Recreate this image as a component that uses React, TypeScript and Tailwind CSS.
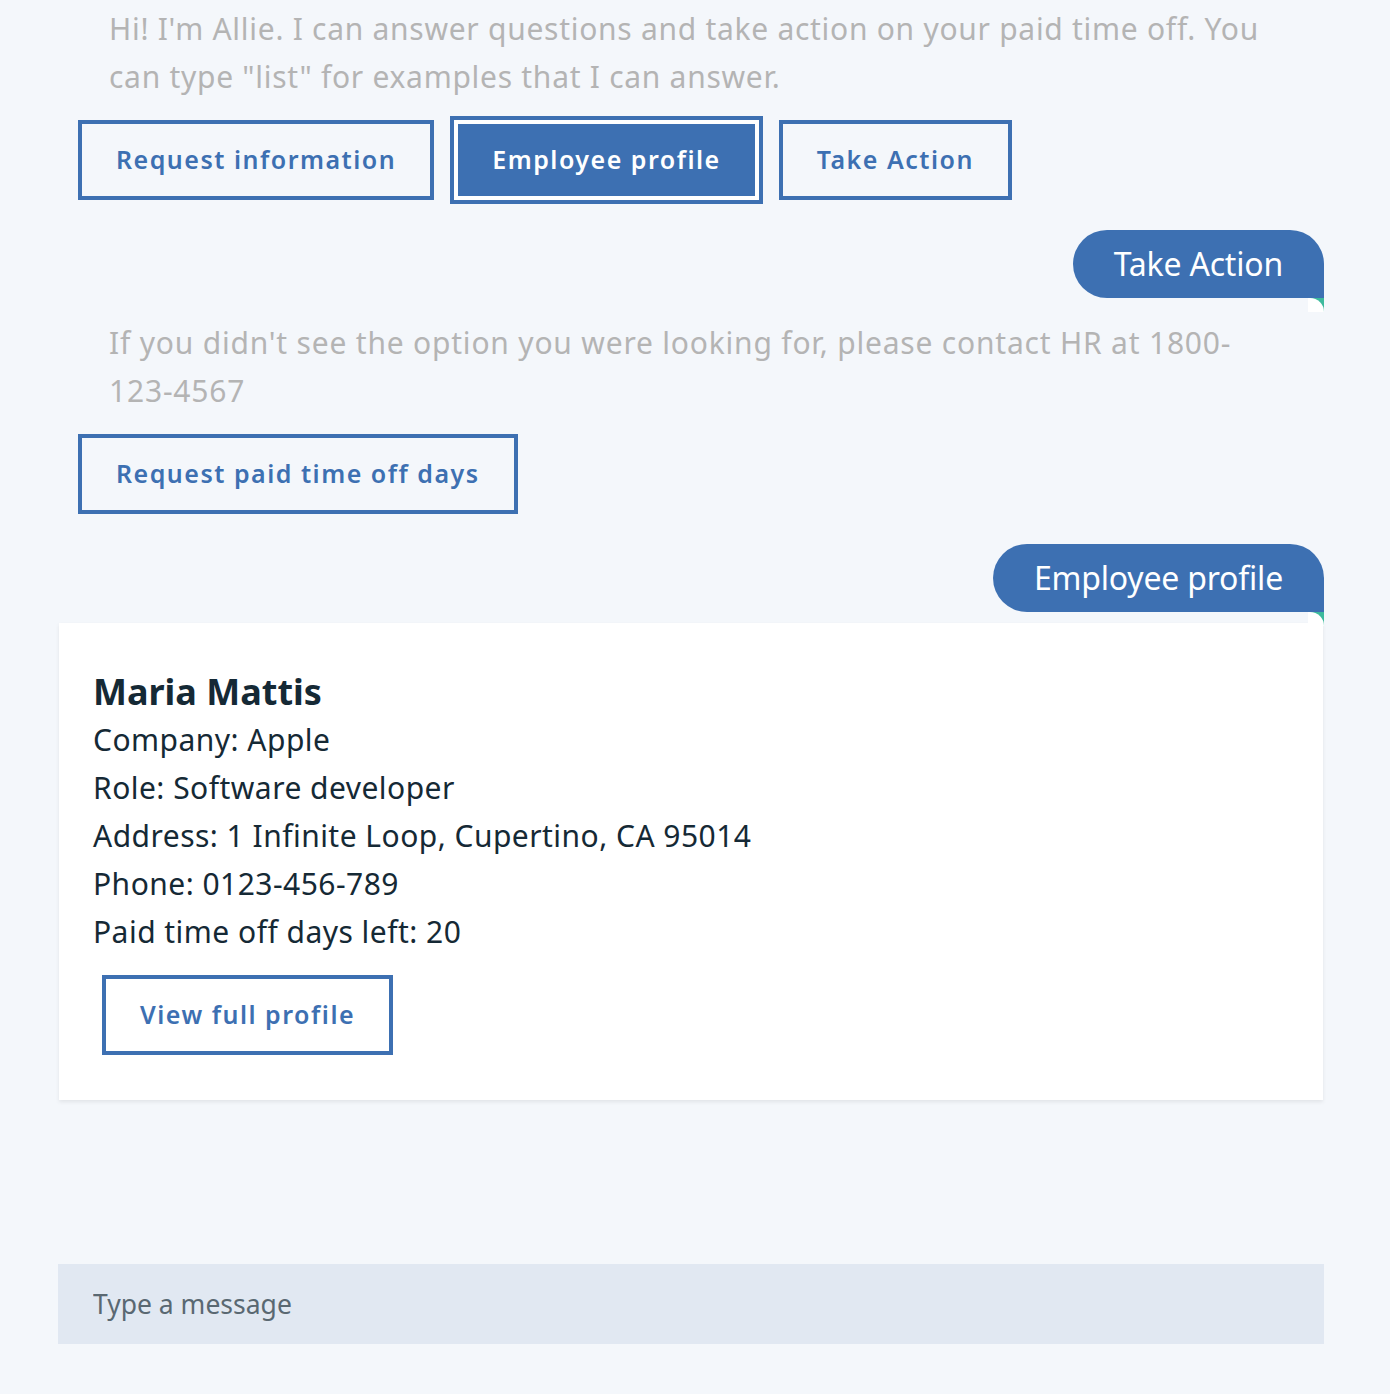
const OptionButton = ({ label, active }: { label: string; active?: boolean }) => {
  if (active) {
    return (
      <button className="h-20 px-[34px] border-4 border-white bg-[#3d70b2] ring-4 ring-[#3d70b2] text-white text-[25px] font-semibold tracking-[1.5px]">
        {label}
      </button>
    );
  }
  return (
    <button className="h-20 px-[34px] border-4 border-[#3d70b2] text-[#3d70b2] text-[25px] font-semibold tracking-[1.5px]">
      {label}
    </button>
  );
};

const UserBubble = ({ text }: { text: string }) => (
  <div className="flex justify-end">
    <div className="relative">
      <div className="h-[68px] px-[41px] flex items-center rounded-[34px] rounded-br-none bg-[#3d70b2] text-white text-[32px] tracking-[-0.2px]">
        {text}
      </div>
      <div className="absolute right-0 top-full w-4 h-[14px] bg-[#3dba9d] z-10">
        <div className="w-full h-full bg-white rounded-tr-[15px]" />
      </div>
    </div>
  </div>
);

export default function App() {
  return (
    <div
      className="min-h-screen bg-[#f4f7fb] pt-[5px] pb-[50px]"
      style={{ fontFamily: '"Noto Sans", Roboto, sans-serif' }}
    >
      <div className="ml-[58px] w-[1266px]">
        <p className="pl-[51px] text-[30px] leading-[48px] tracking-[0.72px] text-[#b4b4b4]">
          Hi! I'm Allie. I can answer questions and take action on your paid time off. You
          <br />
          can type "list" for examples that I can answer.
        </p>

        <div className="mt-[19px] ml-5 flex gap-5">
          <OptionButton label="Request information" />
          <OptionButton label="Employee profile" active />
          <OptionButton label="Take Action" />
        </div>

        <div className="mt-[30px]">
          <UserBubble text="Take Action" />
        </div>

        <p className="mt-[21px] pl-[51px] text-[30px] leading-[48px] tracking-[0.8px] text-[#b4b4b4]">
          If you didn't see the option you were looking for, please contact HR at 1800-
          <br />
          123-4567
        </p>

        <div className="mt-[19px] ml-5 flex">
          <OptionButton label="Request paid time off days" />
        </div>

        <div className="mt-[30px]">
          <UserBubble text="Employee profile" />
        </div>

        <div className="mt-[11px] mx-px bg-white shadow-[0_2px_4px_rgba(0,0,0,0.08)] pt-[45px] pl-[34px] pb-[45px] text-[#152935]">
          <h2 className="text-[36px] leading-[48px] font-bold">Maria Mattis</h2>
          <div className="text-[30px] leading-[48px] tracking-[0.47px]">
            <p>Company: Apple</p>
            <p>Role: Software developer</p>
            <p>Address: 1 Infinite Loop, Cupertino, CA 95014</p>
            <p>Phone: 0123-456-789</p>
            <p>Paid time off days left: 20</p>
          </div>
          <div className="mt-[19px] ml-[9px] flex">
            <OptionButton label="View full profile" />
          </div>
        </div>

        <div className="mt-[164px] h-20 bg-[#e1e8f2] flex items-center">
          <input
            className="w-full h-full pl-[35px] bg-transparent outline-none text-[26.5px] text-[#152935] placeholder:text-[#5a6872]"
            placeholder="Type a message"
          />
        </div>
      </div>
    </div>
  );
}
